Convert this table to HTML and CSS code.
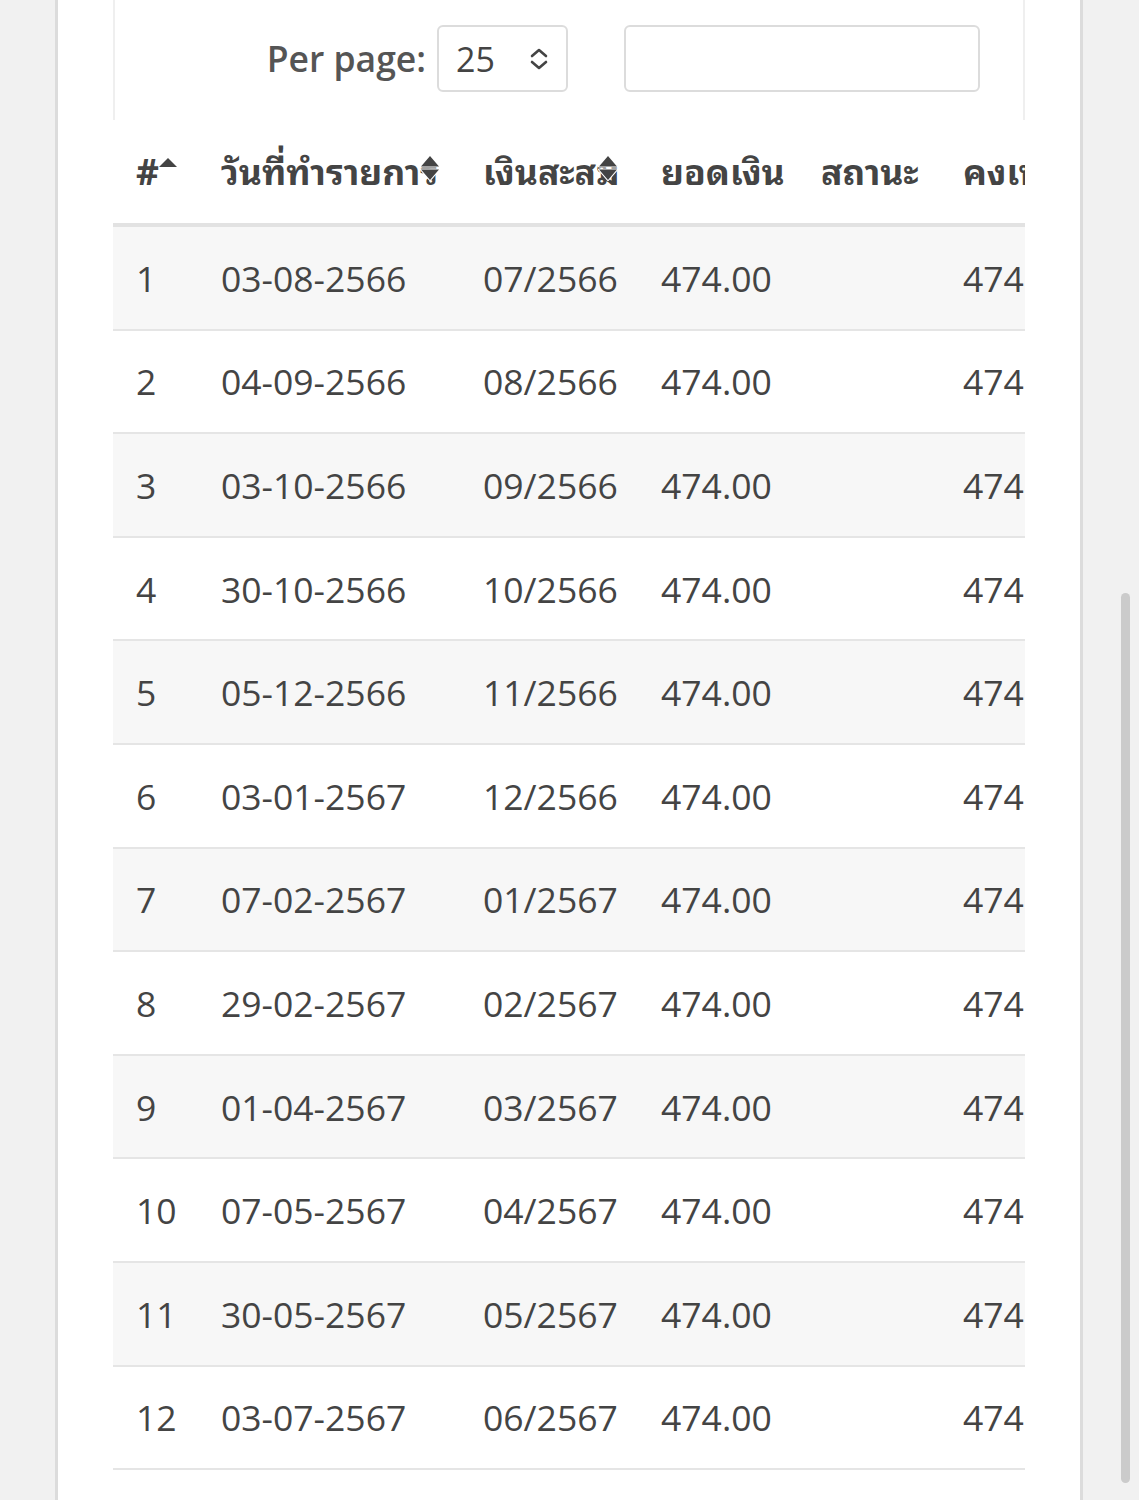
FILE: index.html
```html
<!DOCTYPE html>
<html lang="th">
<head>
<meta charset="utf-8">
<title>Table</title>
<link rel="stylesheet" href="styles.css">
</head>
<body>
<div class="page">
  <div class="card">
    <div class="controls">
      <label class="per-label">Per page:</label>
      <div class="select">
        <span>25</span>
        <svg class="chev" width="22" height="24" viewBox="0 0 22 24"><path d="M4 9 L11 3 L18 9 M4 15 L11 21 L18 15" fill="none" stroke="#444" stroke-width="2.6" stroke-linecap="round" stroke-linejoin="round"/></svg>
      </div>
      <div class="search"></div>
    </div>
    <div class="table-wrap">
      <table class="data">
        <colgroup>
          <col class="c1"><col class="c2"><col class="c3"><col class="c4"><col class="c5"><col class="c6">
        </colgroup>
        <thead>
          <tr>
            <th><span class="th-text">#</span><svg class="sort" width="22" height="28" viewBox="-1 -1 22 28"><path d="M1 12 L10 3 L19 12 Z" fill="#444"/></svg></th>
            <th><span class="th-text">วันที่ทำรายการ</span><svg class="sort" width="22" height="28" viewBox="-1 -1 22 28"><path d="M1 11.5 L10 1 L19 11.5 Z M1 14.5 L10 25 L19 14.5 Z" fill="#444" stroke="#fff" stroke-width="2" stroke-linejoin="round" paint-order="stroke"/></svg></th>
            <th><span class="th-text">เงินสะสม</span><svg class="sort" width="22" height="28" viewBox="-1 -1 22 28"><path d="M1 11.5 L10 1 L19 11.5 Z M1 14.5 L10 25 L19 14.5 Z" fill="#444" stroke="#fff" stroke-width="2" stroke-linejoin="round" paint-order="stroke"/></svg></th>
            <th><span class="th-text">ยอดเงิน</span></th>
            <th><span class="th-text">สถานะ</span></th>
            <th><span class="th-text">คงเหลือ</span></th>
          </tr>
        </thead>
        <tbody>
          <tr><td>1</td><td>03-08-2566</td><td>07/2566</td><td>474.00</td><td></td><td>474.00</td></tr>
          <tr><td>2</td><td>04-09-2566</td><td>08/2566</td><td>474.00</td><td></td><td>474.00</td></tr>
          <tr><td>3</td><td>03-10-2566</td><td>09/2566</td><td>474.00</td><td></td><td>474.00</td></tr>
          <tr><td>4</td><td>30-10-2566</td><td>10/2566</td><td>474.00</td><td></td><td>474.00</td></tr>
          <tr><td>5</td><td>05-12-2566</td><td>11/2566</td><td>474.00</td><td></td><td>474.00</td></tr>
          <tr><td>6</td><td>03-01-2567</td><td>12/2566</td><td>474.00</td><td></td><td>474.00</td></tr>
          <tr><td>7</td><td>07-02-2567</td><td>01/2567</td><td>474.00</td><td></td><td>474.00</td></tr>
          <tr><td>8</td><td>29-02-2567</td><td>02/2567</td><td>474.00</td><td></td><td>474.00</td></tr>
          <tr><td>9</td><td>01-04-2567</td><td>03/2567</td><td>474.00</td><td></td><td>474.00</td></tr>
          <tr><td>10</td><td>07-05-2567</td><td>04/2567</td><td>474.00</td><td></td><td>474.00</td></tr>
          <tr><td>11</td><td>30-05-2567</td><td>05/2567</td><td>474.00</td><td></td><td>474.00</td></tr>
          <tr><td>12</td><td>03-07-2567</td><td>06/2567</td><td>474.00</td><td></td><td>474.00</td></tr>
        </tbody>
      </table>
    </div>
  </div>
  <div class="scrollbar"></div>
</div>
</body>
</html>
```
FILE: styles.css
```css
html, body {
  margin: 0;
  padding: 0;
  height: 1500px;
  overflow: hidden;
}
body {
  background: #f1f1f1;
  font-family: "Open Sans", "Noto Sans Thai Looped", "Noto Looped Thai", "Thonburi", "Loma", "Garuda", "Noto Sans Thai", "DejaVu Sans", sans-serif;
  color: #444;
}
.page {
  position: relative;
  height: 1500px;
}
.card {
  margin-left: 55px;
  height: 1500px;
  background: #fff;
  border-left: 3px solid #dcdcdc;
  border-right: 3px solid #dcdcdc;
  padding: 0 55px;
  box-sizing: content-box;
  width: 912px;
}
.controls {
  height: 120px;
  border-left: 2px solid #efefef;
  border-right: 2px solid #efefef;
  display: flex;
  align-items: flex-start;
  justify-content: flex-end;
  padding: 25px 43px 0 0;
  box-sizing: border-box;
}
.per-label {
  font-size: 35.5px;
  font-weight: 600;
  color: #555;
  line-height: 67px;
  margin-right: 11px;
}
.select {
  width: 131px;
  height: 67px;
  box-sizing: border-box;
  border: 2px solid #dcdcdc;
  border-radius: 6px;
  display: flex;
  align-items: center;
  justify-content: space-between;
  padding: 0 16px 0 17px;
  font-size: 34px;
  color: #444;
}
.chev {
  display: block;
}
.search {
  width: 356px;
  height: 67px;
  box-sizing: border-box;
  border: 2px solid #dcdcdc;
  border-radius: 6px;
  margin-left: 56px;
}
.table-wrap {
  overflow: hidden;
  width: 912px;
}
.data {
  border-collapse: collapse;
  table-layout: fixed;
  width: 1200px;
  font-size: 35.5px;
  line-height: 48px;
}
.c1 { width: 85px; }
.c2 { width: 262px; }
.c3 { width: 178px; }
.c4 { width: 160px; }
.c5 { width: 142px; }
.c6 { width: 373px; }
.data th {
  position: relative;
  text-align: left;
  font-weight: 700;
  height: 105px;
  padding: 0 0 6px 23px;
  border-bottom: 4px solid #e2e2e2;
  white-space: nowrap;
  color: #444;
  box-sizing: border-box;
  overflow: visible;
}
.th-text {
  display: inline-block;
  line-height: 48px;
  vertical-align: middle;
}
.sort {
  position: absolute;
  right: 19px;
  top: 50%;
  margin-top: -18px;
}
.data td {
  height: 101.6px;
  padding: 0 0 0 23px;
  border-bottom: 2px solid #e5e5e5;
  white-space: nowrap;
  color: #444;
}
.data tbody tr:nth-child(odd) td {
  background: #f7f7f7;
}
.scrollbar {
  position: absolute;
  left: 1121px;
  top: 593px;
  width: 9px;
  height: 890px;
  border-radius: 5px;
  background: #cbcbcb;
}
```
